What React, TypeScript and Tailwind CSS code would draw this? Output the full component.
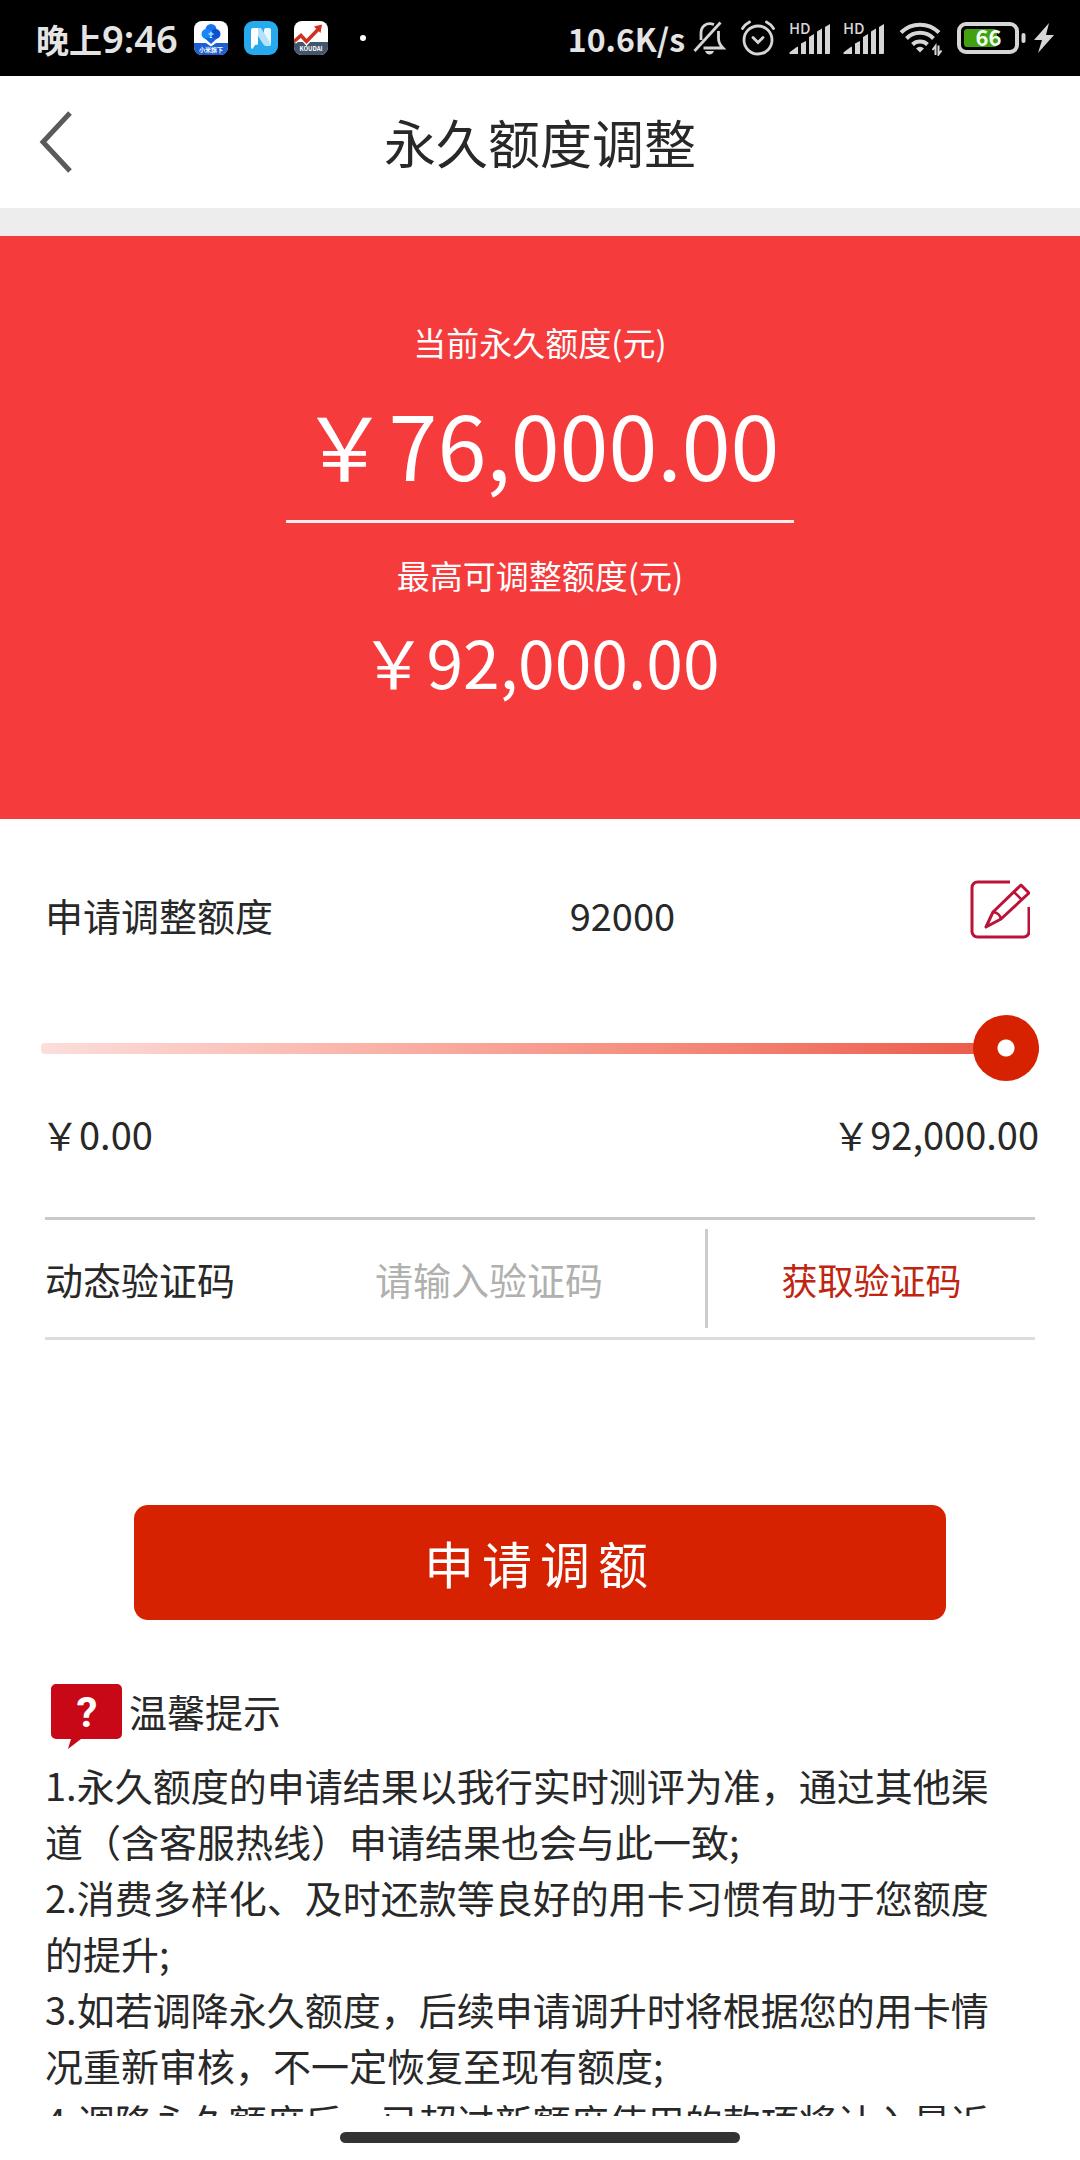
import { useState } from "react";

const TIPS = [
  "1.永久额度的申请结果以我行实时测评为准，通过其他渠道（含客服热线）申请结果也会与此一致;",
  "2.消费多样化、及时还款等良好的用卡习惯有助于您额度的提升;",
  "3.如若调降永久额度，后续申请调升时将根据您的用卡情况重新审核，不一定恢复至现有额度;",
  "4.调降永久额度后，已超过新额度使用的款项将计入最近",
];

function CloudAppIcon() {
  return (
    <svg width="34" height="34" viewBox="0 0 34 34" aria-hidden="true">
      <defs>
        <clipPath id="cloud-clip">
          <rect width="34" height="34" rx="8" />
        </clipPath>
      </defs>
      <g clipPath="url(#cloud-clip)">
        <rect width="34" height="34" fill="#fff" />
        <rect y="22" width="34" height="12" fill="#1d5fd0" />
        <path d="M12 22h10l-5 3.500z" fill="#fff" />
        <circle cx="17" cy="8.500" r="5.500" fill="#1a74ee" />
        <circle cx="12.500" cy="13" r="5" fill="#1a86f5" />
        <circle cx="21.500" cy="13" r="5" fill="#0f4fd0" />
        <path d="M10.500 17h13L17 23z" fill="#1463e0" />
        <path d="M17 9.500c.500 2 1.500 3 3.500 3.500-2 .500-3 1.500-3.500 3.500-.500-2-1.500-3-3.500-3.500 2-.500 3-1.500 3.500-3.500z" fill="#8fd8ff" />
      </g>
      <text x="17" y="31" fontSize="6" fontWeight="700" textAnchor="middle" fill="#fff">
        小米旗下
      </text>
    </svg>
  );
}

function NoteAppIcon() {
  return (
    <svg width="34" height="34" viewBox="0 0 34 34" aria-hidden="true">
      <rect width="34" height="34" rx="9" fill="#27a9ee" />
      <path d="M7 9a2 2 0 0 1 2-2h5v16.500l-3 .500-2.500 4L7 27z" fill="#fff" />
      <path d="M20 9a2 2 0 0 1 2-2h3a2 2 0 0 1 2 2v14a2 2 0 0 1-2 2h-3l-2-2z" fill="#fff" opacity=".9" />
      <path d="M14 7h3l10 16a2 2 0 0 1-2 2h-3a3 3 0 0 1-2.500-1.500L14 15z" fill="#b5e1fa" />
    </svg>
  );
}

function StockAppIcon() {
  return (
    <svg width="34" height="34" viewBox="0 0 34 34" aria-hidden="true">
      <defs>
        <clipPath id="stock-clip">
          <rect width="34" height="34" rx="8" />
        </clipPath>
      </defs>
      <g clipPath="url(#stock-clip)">
        <rect width="34" height="34" fill="#fff" />
        <rect y="21" width="34" height="13" fill="#44566c" />
        <path d="M0 20.500l7-6 5.500 6L24 8.500" stroke="#fff" strokeWidth="6" fill="none" />
        <path d="M0 20.500l7-6 5.500 6L24 8.500" stroke="#d0301f" strokeWidth="3.500" fill="none" />
        <path d="M20 5.500l8-2-1.500 8.500z" fill="#d0301f" />
      </g>
      <text x="17" y="30" fontSize="6" fontWeight="700" textAnchor="middle" fill="#fff">
        KOUDAI
      </text>
    </svg>
  );
}

function BellOffIcon() {
  return (
    <svg width="34" height="34" viewBox="0 0 34 34" fill="none" stroke="#d6d6d6" strokeWidth="2.800" aria-hidden="true">
      <path d="M27.500 1.500L1.500 30" />
      <path d="M21 3.500C13 .500 8 6 8 12v7" />
      <path d="M25.500 10v7.500c0 3 1.500 6.500 4.500 9.500H10.500" />
      <path d="M12 30h9c-1 2.500-2.500 3.500-4.500 3.500S13 32.500 12 30z" fill="#d6d6d6" stroke="none" />
    </svg>
  );
}

function AlarmIcon() {
  return (
    <svg width="34" height="36" viewBox="0 0 34 36" fill="none" stroke="#d6d6d6" strokeWidth="2.800" strokeLinecap="round" aria-hidden="true">
      <circle cx="17" cy="20" r="14" />
      <path d="M12 17.500l5 5 5-5" />
      <path d="M1.500 8.500c1.500-2.500 4-5 7-6.500M32.500 8.500c-1.500-2.500-4-5-7-6.500" />
    </svg>
  );
}

function SignalIcon() {
  return (
    <svg width="42" height="44" viewBox="0 -6 42 44" fill="#d6d6d6" className="overflow-visible" aria-hidden="true">
      <text x="0" y="12" fontSize="15" fontWeight="500">
        HD
      </text>
      <path d="M1 30l6-4.500 2-1V32H2a1 1 0 0 1-1-2z" />
      <path d="M12 21.500l5-2.500v13h-5z" />
      <path d="M20 15l5-3v20h-5z" />
      <path d="M28 9.500l5-3V32h-5z" />
      <path d="M36 5l5-3v29a1 1 0 0 1-1 1h-4z" />
    </svg>
  );
}

function WifiIcon() {
  return (
    <svg width="44" height="36" viewBox="0 0 44 36" fill="none" stroke="#d6d6d6" strokeWidth="4" aria-hidden="true">
      <path d="M2 12.500a27 27 0 0 1 38 0" />
      <path d="M7.500 18.500a19 19 0 0 1 27 0" />
      <path d="M13.500 24.500a11 11 0 0 1 15 0" />
      <path d="M17 28.500a5.500 5.500 0 0 1 8 0l-4 4z" fill="#d6d6d6" stroke="none" />
      <path d="M36.500 35V26l-3 4M39.500 25.500v9l3-4" strokeWidth="2" />
    </svg>
  );
}

function BatteryIcon() {
  return (
    <svg width="70" height="40" viewBox="0 -4 70 40" className="overflow-visible" aria-hidden="true">
      <rect x="2" y="2" width="58" height="28" rx="7" fill="none" stroke="#d6d6d6" strokeWidth="4" />
      <rect x="7" y="7" width="33" height="18" rx="3" fill="#43a011" />
      <rect x="64.500" y="11" width="4" height="10" rx="2" fill="#d6d6d6" />
      <text x="31.500" y="24" fontSize="22" fontWeight="700" textAnchor="middle" fill="#f2fff0">
        66
      </text>
    </svg>
  );
}

function BoltIcon() {
  return (
    <svg width="20" height="30" viewBox="0 0 20 30" fill="#d6d6d6" aria-hidden="true">
      <path d="M15 0L0 17h8L4 30l16-18h-8z" />
    </svg>
  );
}

function EditIcon() {
  return (
    <svg width="60" height="60" viewBox="0 0 60 60" fill="none" stroke="#bb1238" strokeWidth="3" aria-hidden="true">
      <path d="M40 2H7.500a5.500 5.500 0 0 0-5.500 5.500v44a5.500 5.500 0 0 0 5.500 5.500h46a5.500 5.500 0 0 0 5.500-5.500V27" />
      <path d="M51 5l8 8-28 26-15 8L23 32z" strokeLinejoin="round" />
      <path d="M44 12l8 8M23 32c4 .500 7 2.500 8 7" strokeWidth="2.500" />
    </svg>
  );
}

function QuestionBubble() {
  return (
    <svg width="72" height="65" viewBox="0 0 72 65" aria-hidden="true">
      <path
        d="M5 0h61a5 5 0 0 1 5 5v45a5 5 0 0 1-5 5H30L17 65l3-10H5a5 5 0 0 1-5-5V5a5 5 0 0 1 5-5z"
        fill="#c90817"
      />
      <text x="36" y="43" fontSize="42" fontWeight="700" textAnchor="middle" fill="#fff" className="font-['Roboto',sans-serif]">
        ?
      </text>
    </svg>
  );
}

export default function App() {
  const [amount, setAmount] = useState("92000");

  return (
    <div className="flex h-screen flex-col overflow-hidden bg-white font-['Noto_Sans_CJK_SC',sans-serif] text-[38px] text-[#282828]">
      <div className="flex h-[76px] shrink-0 items-center justify-between bg-black pr-[26px] pl-9 text-[#e4e4e4]">
        <div className="flex items-center gap-4">
          <span className="text-[33px] leading-[40px] font-bold whitespace-nowrap">
            晚上<span className="font-['Noto_Sans',sans-serif] text-[38px] font-semibold">9:46</span>
          </span>
          <CloudAppIcon />
          <NoteAppIcon />
          <StockAppIcon />
          <span className="ml-4 size-[6px] rounded-full bg-white" />
        </div>
        <div className="flex items-center gap-[14px]">
          <div className="flex items-center gap-2">
            <span className="text-[32px] leading-[40px] font-bold whitespace-nowrap">10.6K/s</span>
            <BellOffIcon />
          </div>
          <AlarmIcon />
          <div className="flex items-center gap-3">
            <SignalIcon />
            <SignalIcon />
          </div>
          <WifiIcon />
          <div className="flex items-center gap-[7px]">
            <BatteryIcon />
            <BoltIcon />
          </div>
        </div>
      </div>

      <header className="grid h-[132px] shrink-0 grid-cols-[1fr_auto_1fr] items-center px-9">
        <button type="button" aria-label="返回" className="w-fit">
          <svg width="40" height="64" viewBox="0 0 40 64" fill="none" stroke="#5a5a5a" strokeWidth="5" aria-hidden="true">
            <path d="M34 3L7 32l27 29" />
          </svg>
        </button>
        <h1 className="text-[52px] leading-[72px]">永久额度调整</h1>
      </header>

      <main className="min-h-0 flex-1 overflow-hidden border-t-[28px] border-[#ededed]">
        <section className="flex flex-col items-center bg-[#f53b3c] pt-[82px] pb-[114px] text-white">
          <p className="text-[33px] leading-[48px]">当前永久额度(元)</p>
          <p className="mt-[17px] text-[88px] leading-[120px]">￥76,000.00</p>
          <hr className="mt-[17px] w-[47%] border-t-[3px] border-[#fdeeee]" />
          <p className="mt-7 text-[33px] leading-[48px]">最高可调整额度(元)</p>
          <p className="mt-4 text-[66px] leading-[90px]">￥92,000.00</p>
        </section>

        <form className="px-[45px] pt-[61px]" onSubmit={(event) => event.preventDefault()}>
          <div className="flex items-start leading-[70px]">
            <label htmlFor="amount" className="w-[53%]">
              申请调整额度
            </label>
            <input
              id="amount"
              inputMode="numeric"
              value={amount}
              onChange={(event) => setAmount(event.target.value)}
              className="h-[70px] min-w-0 flex-1 outline-none"
            />
            <button type="button" aria-label="编辑额度" className="mr-[5px]">
              <EditIcon />
            </button>
          </div>

          <div className="-mx-1 mt-[65px]">
            <input
              type="range"
              aria-label="调整额度"
              min="0"
              max="92000"
              value={Number(amount) || 0}
              onChange={(event) => setAmount(event.target.value)}
              className="block h-[66px] w-full appearance-none bg-transparent [&::-webkit-slider-runnable-track]:h-[11px] [&::-webkit-slider-runnable-track]:rounded-[4px] [&::-webkit-slider-runnable-track]:bg-linear-to-r [&::-webkit-slider-runnable-track]:from-[#fbdedb] [&::-webkit-slider-runnable-track]:to-[#ea5140] [&::-webkit-slider-thumb]:-mt-7 [&::-webkit-slider-thumb]:size-[66px] [&::-webkit-slider-thumb]:appearance-none [&::-webkit-slider-thumb]:rounded-full [&::-webkit-slider-thumb]:bg-[radial-gradient(circle,#fff_8px,#d62200_9px)]"
            />
            <div className="mt-6 flex justify-between leading-[58px]">
              <span>￥0.00</span>
              <span>￥92,000.00</span>
            </div>
          </div>

          <div className="mt-[54px] flex h-[123px] items-stretch border-t-[3px] border-b-[3px] border-t-[#c9c9c9] border-b-[#dcdcdc]">
            <label htmlFor="code" className="flex w-1/3 items-center">
              动态验证码
            </label>
            <input
              id="code"
              placeholder="请输入验证码"
              className="w-1/3 min-w-0 outline-none placeholder:text-[#b0b0ae]"
            />
            <button type="button" className="my-[9px] flex-1 border-l-[3px] border-[#cccccc] text-[36px] text-[#bf2510]">
              获取验证码
            </button>
          </div>

          <button
            type="submit"
            className="mx-auto mt-[165px] block h-[115px] w-[82%] rounded-[14px] bg-[#d62200] text-[50px] tracking-[8px] text-white"
          >
            申请调额
          </button>
        </form>

        <section className="mt-16 pr-[72px] pl-[45px]">
          <div className="flex items-start gap-[6px] pl-[6px]">
            <QuestionBubble />
            <h2 className="leading-[54px]">温馨提示</h2>
          </div>
          <div className="mt-2 leading-[56px]">
            {TIPS.map((tip) => (
              <p key={tip}>{tip}</p>
            ))}
          </div>
        </section>
      </main>

      <footer className="flex h-11 shrink-0 justify-center pt-4">
        <div className="h-[11px] w-[37%] rounded-full bg-[#333333]" />
      </footer>
    </div>
  );
}
